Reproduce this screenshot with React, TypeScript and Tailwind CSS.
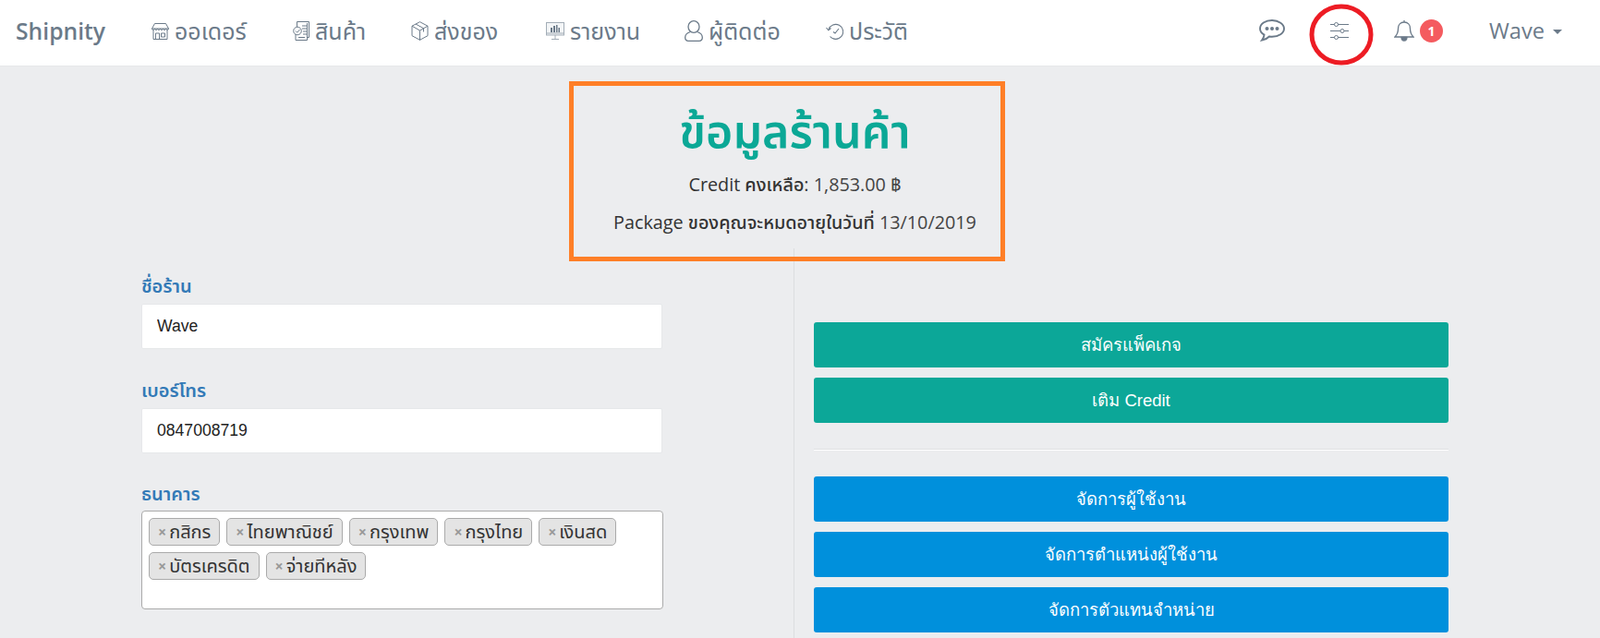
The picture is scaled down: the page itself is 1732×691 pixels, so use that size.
import type { ReactNode } from "react";

const thai = "font-['Open_Sans','Noto_Sans','Noto_Sans_Thai','Noto_Sans_Thai_Looped','Noto_Sans_CJK_SC',sans-serif]";

function StoreIcon() {
  return (
    <svg width="19" height="18" viewBox="0 0 19 18" fill="none" stroke="currentColor" strokeWidth="1">
      <path d="M3.500.5h12l3 5.500H.5zM.5 6c0 2 2.800 2 3 0 .2 2 2.800 2 3 0 .2 2 2.800 2 3 0 .2 2 2.800 2 3 0 .2 2 2.800 2 3 0 .2 2 3 2 3 0" />
      <path d="M2 8v9.500h15V8M4.500 11h4v6.500h-4zM10.500 11h4v4h-4z" />
    </svg>
  );
}

function OrderIcon() {
  return (
    <svg width="18" height="21" viewBox="0 0 18 21" fill="none" stroke="currentColor" strokeWidth="1">
      <path d="M4.500 6V.5h13v17h-2M3 14v6.500h12.500V2" />
      <circle cx="5" cy="10.500" r="4.300" />
      <path d="M3 10.500l1.700 1.700L7.500 9M10 5h5M10 8h5M11 11h4M11 14h4M6 17.500h7" />
    </svg>
  );
}

function BoxIcon() {
  return (
    <svg width="19" height="21" viewBox="0 0 19 21" fill="none" stroke="currentColor" strokeWidth="1">
      <path d="M9.500.7l8.500 4.500v10.500l-8.500 4.600L1 15.700V5.200zM1 5.200l8.500 4.800L18 5.200M9.500 10v10.600M5 3l8.500 4.700v3.800" />
    </svg>
  );
}

function ReportIcon() {
  return (
    <svg width="20" height="19" viewBox="0 0 20 19">
      <rect x=".5" y=".5" width="19" height="13.500" fill="#f3f5f7" stroke="#a3adb7" />
      <path d="M.5 12h19M10 14v4M6 18.500h8" stroke="#a3adb7" fill="none" />
      <path d="M5 6h2v5H5zM8 4h2v7H8zM11 3h1.500v8H11zM13.500 6H15v5h-1.500z" fill="#6b7a89" />
    </svg>
  );
}

function UserIcon() {
  return (
    <svg width="20" height="23" viewBox="0 0 20 23" fill="none" stroke="currentColor" strokeWidth="1.300">
      <ellipse cx="10" cy="7" rx="6" ry="6.300" />
      <path d="M6.500 12.500C3 13.500.7 15.500.7 18.500c0 2.500 1.500 3.800 3.500 3.800h11.600c2 0 3.500-1.300 3.500-3.800 0-3-2.300-5-5.800-6" />
    </svg>
  );
}

function HistoryIcon() {
  return (
    <svg width="19" height="18" viewBox="0 0 19 18" fill="none" stroke="currentColor" strokeWidth="1.100">
      <path d="M3 7a8 8 0 1 1 1.500 7.500" />
      <path d="M.5 5l2.300 2.800L5.500 5.500M8 9.500l2 1.500 4-5" />
    </svg>
  );
}

function ChatIcon() {
  return (
    <svg width="28" height="24" viewBox="0 0 28 24" fill="none">
      <path d="M14 1C6.800 1 1 4.800 1 10c0 2.800 1.700 5 4.500 6.600-.2 2.300-1.200 4.400-2.500 6 3.200-.5 6-2 8-4.100 1 .2 2 .300 3 .300 7.200 0 13-4 13-8.800S21.200 1 14 1z" stroke="#6b7a89" strokeWidth="1.900" />
      <circle cx="8.500" cy="10" r="2" fill="#6b7a89" />
      <circle cx="14" cy="10" r="2" fill="#6b7a89" />
      <circle cx="19.500" cy="10" r="2" fill="#6b7a89" />
    </svg>
  );
}

function SlidersIcon() {
  return (
    <svg width="20" height="19" viewBox="0 0 20 19" fill="none" stroke="#6b7a89" strokeWidth="1">
      <path d="M0 2.500h4.500M8.500 2.500H20M0 9.500h11M15 9.500h5M0 16.500h4.500M8.500 16.500H20" />
      <circle cx="6.500" cy="2.500" r="2" />
      <circle cx="13" cy="9.500" r="2" />
      <circle cx="6.500" cy="16.500" r="2" />
    </svg>
  );
}

function BellIcon() {
  return (
    <svg width="22" height="24" viewBox="0 0 22 24" fill="none" stroke="#6b7a89" strokeWidth="1.300">
      <path d="M11 3c-4 0-6.500 3-6.500 7 0 5-1.500 7-3.500 9h20c-2-2-3.500-4-3.500-9 0-4-2.500-7-6.500-7zM11 3V1" />
      <path d="M8 19.500c0 2 1.300 3.500 3 3.500s3-1.500 3-3.500z" fill="#6b7a89" />
    </svg>
  );
}

function NavItem({ icon, label, className }: { icon: ReactNode; label: string; className: string }) {
  return (
    <a className={`flex items-center gap-[6px] text-[#6b7a89] text-[25px] ${className}`}>
      {icon}
      <span>{label}</span>
    </a>
  );
}

function FieldLabel({ children, className }: { children: ReactNode; className: string }) {
  return <label className={`block text-[#337ab7] text-[20px] font-semibold leading-[28px] ${className}`}>{children}</label>;
}

function Field({ label, value }: { label: string; value: string }) {
  return (
    <div className="mb-[31px]">
      <FieldLabel className="mb-[5px]">{label}</FieldLabel>
      <input
        readOnly
        value={value}
        className="w-full h-[49px] bg-white rounded-[2px] border border-[#e6e8ea] px-[16px] text-[17.6px] text-[#222] font-['Liberation_Sans',sans-serif] outline-none"
      />
    </div>
  );
}

function Tag({ label }: { label: string }) {
  return (
    <span className="flex items-center h-[30px] px-[9px] gap-[3px] bg-[#e4e4e4] border border-[#aaa] rounded-[5px] text-[#333] text-[20px]">
      <span className="text-[#999] font-bold text-[16px]">×</span>
      {label}
    </span>
  );
}

function ActionButton({ label, tone }: { label: string; tone: "green" | "blue" }) {
  return (
    <button className={`w-full h-[49px] rounded-[3px] text-white text-[18.5px] font-['Liberation_Sans',sans-serif] ${tone === "green" ? "bg-[#0ca798]" : "bg-[#0090dc]"}`}>
      {label}
    </button>
  );
}

export default function App() {
  const banks = ["กสิกร", "ไทยพาณิชย์", "กรุงเทพ", "กรุงไทย", "เงินสด", "บัตรเครดิต", "จ่ายทีหลัง"];

  return (
    <div className={`relative h-[691px] overflow-hidden bg-[#ecedef] ${thai}`}>
      <nav className="flex items-center h-[72px] pb-[4px] bg-white border-b border-[#e6e7e9]">
        <a className="ml-[17px] w-[147px] text-[#6b7a89] text-[24.7px] font-semibold">Shipnity</a>
        <NavItem icon={<StoreIcon />} label="ออเดอร์" className="w-[153px]" />
        <NavItem icon={<OrderIcon />} label="สินค้า" className="w-[128px]" />
        <NavItem icon={<BoxIcon />} label="ส่งของ" className="w-[146px]" />
        <NavItem icon={<ReportIcon />} label="รายงาน" className="w-[150px]" />
        <NavItem icon={<UserIcon />} label="ผู้ติดต่อ" className="w-[153px]" />
        <NavItem icon={<HistoryIcon />} label="ประวัติ" className="w-[100px]" />
        <div className="ml-auto flex items-center">
          <ChatIcon />
          <span className="ml-[49px]"><SlidersIcon /></span>
          <span className="ml-[49px]"><BellIcon /></span>
          <span className="ml-[6px] flex items-center justify-center size-[25px] rounded-full bg-[#f45b5f] text-white text-[14px] font-bold">1</span>
          <span className="ml-[50px] text-[#6b7a89] text-[23.6px]">Wave</span>
          <span className="ml-[9px] mr-[41px] mt-[3px] border-x-[5px] border-t-[5px] border-x-transparent border-t-[#6b7a89]"></span>
        </div>
      </nav>

      <main className="ml-[153px] w-[1415px]">
        <header className="h-[197px] text-center text-[#333] text-[19.8px]">
          <h1 className="pt-[36px] text-[#0ba896] text-[50px] font-semibold leading-[66px]">ข้อมูลร้านค้า</h1>
          <p className="mt-[13px] leading-[26px]"><span className="font-medium">Credit คงเหลือ:</span> <span className="text-[#444]">1,853.00 ฿</span></p>
          <p className="mt-[15px] leading-[26px]"><span className="font-medium">Package ของคุณจะหมดอายุในวันที่</span> <span className="text-[#444]">13/10/2019</span></p>
        </header>

        <div className="flex">
          <section className="w-[564px] mr-[142px]">
            <div className="pt-[27px]">
              <Field label="ชื่อร้าน" value="Wave" />
              <Field label="เบอร์โทร" value="0847008719" />
              <FieldLabel className="-mt-[1px] mb-[4px]">ธนาคาร</FieldLabel>
              <div className="flex flex-wrap content-start gap-x-[7px] gap-y-[7px] h-[107px] w-[565px] bg-white border border-[#aaa] rounded-[4px] px-[7px] pt-[7px]">
                {banks.map((b) => <Tag key={b} label={b} />)}
              </div>
            </div>
          </section>

          <section className="flex-1 border-l border-[#dcdee0] pl-[21px] pt-[80px] min-h-[500px]">
            <div className="flex flex-col gap-[11px]">
              <ActionButton label="สมัครแพ็คเกจ" tone="green" />
              <ActionButton label="เติม Credit" tone="green" />
            </div>
            <hr className="mt-[28px] mb-[28px] border-t border-b border-t-[#dfe0e2] border-b-white" />
            <div className="flex flex-col gap-[11px]">
              <ActionButton label="จัดการผู้ใช้งาน" tone="blue" />
              <ActionButton label="จัดการตำแหน่งผู้ใช้งาน" tone="blue" />
              <ActionButton label="จัดการตัวแทนจำหน่าย" tone="blue" />
            </div>
          </section>
        </div>
      </main>

      {/* annotations drawn on top of the screenshot */}
      <div className="absolute left-[616px] top-[88px] w-[472px] h-[195px] border-[5px] border-[#ff7f27]"></div>
      <svg className="absolute left-[1417px] top-[4px]" width="70" height="67" viewBox="0 0 70 67" fill="none">
        <ellipse cx="35" cy="33.500" rx="32" ry="30.500" stroke="#ed1c24" strokeWidth="5" />
      </svg>
    </div>
  );
}
